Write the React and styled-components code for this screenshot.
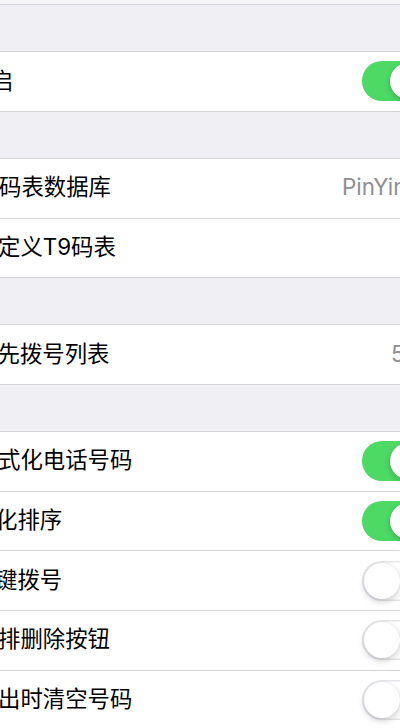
import React from "react";
import styled, { createGlobalStyle } from "styled-components";

const Global = createGlobalStyle`
  html, body { margin: 0; padding: 0; background: #efeff4; }
  body { font-family: "Inter", "Noto Sans CJK SC", "Noto Sans", sans-serif; }
`;

const Screen = styled.div`
  width: 400px;
  height: 728px;
  overflow: hidden;
  background: #efeff4;
  display: flex;
  flex-direction: column;
`;

const TopStrip = styled.div`
  height: 4px;
  flex: none;
  background: #f5f5f7;
  border-bottom: 1px solid #d3d3d8;
`;

const Gap = styled.div`
  height: 46.2px;
  flex: none;
`;

const Group = styled.div`
  flex: none;
  background: #ffffff;
  border-top: 1px solid #d3d3d8;
  border-bottom: 1px solid #d3d3d8;
  display: flex;
  flex-direction: column;
`;

const Row = styled.div`
  height: 58.6px;
  flex: none;
  display: flex;
  align-items: center;
  & + & {
    border-top: 1px solid #d3d3d8;
  }
`;

const Label = styled.span`
  font-size: 22.4px;
  line-height: 1.2;
  padding-bottom: 1px;
  color: #000;
  white-space: nowrap;
  margin-left: ${(p) => p.$shift}px;
  flex: none;
`;

const Spacer = styled.div`
  flex: 1;
`;

const Value = styled.span`
  flex: none;
  width: 100px;
  font-size: 22.4px;
  line-height: 1.2;
  padding-bottom: 1px;
  color: #8e8e93;
  white-space: nowrap;
  margin-right: ${(p) => -p.$cut}px;
`;

const Switch = styled.div`
  flex: none;
  box-sizing: border-box;
  width: 66px;
  height: 40px;
  border-radius: 20px;
  padding: 2px;
  display: flex;
  align-items: center;
  justify-content: ${(p) => (p.$on ? "flex-end" : "flex-start")};
  background: ${(p) => (p.$on ? "#4cd964" : "#ffffff")};
  box-shadow: ${(p) => (p.$on ? "none" : "inset 0 0 0 1.5px #e5e5ea")};
  margin-right: -28px;
`;

const Knob = styled.div`
  width: 36px;
  height: 36px;
  border-radius: 50%;
  background: #ffffff;
  box-shadow: 0 3px 6px rgba(0, 0, 0, 0.18), 0 0 0 0.5px rgba(0, 0, 0, 0.08);
`;

const Toggle = ({ on }) => (
  <Switch $on={on}>
    <Knob />
  </Switch>
);

export default function App() {
  return (
    <>
      <Global />
      <Screen>
        <TopStrip />
        <Gap />
        <Group>
          <Row>
            <Label $shift={-9}>启</Label>
            <Spacer />
            <Toggle on />
          </Row>
        </Group>
        <Gap />
        <Group>
          <Row>
            <Label $shift={-1}>码表数据库</Label>
            <Spacer />
            <Value $cut={42}>PinYin</Value>
          </Row>
          <Row>
            <Label $shift={-2}>定义T9码表</Label>
          </Row>
        </Group>
        <Gap />
        <Group>
          <Row>
            <Label $shift={-2.5}>先拨号列表</Label>
            <Spacer />
            <Value $cut={91}>5</Value>
          </Row>
        </Group>
        <Gap />
        <Group>
          <Row>
            <Label $shift={-2}>式化电话号码</Label>
            <Spacer />
            <Toggle on />
          </Row>
          <Row>
            <Label $shift={-5}>化排序</Label>
            <Spacer />
            <Toggle on />
          </Row>
          <Row>
            <Label $shift={-5}>键拨号</Label>
            <Spacer />
            <Toggle />
          </Row>
          <Row>
            <Label $shift={-2}>排删除按钮</Label>
            <Spacer />
            <Toggle />
          </Row>
          <Row>
            <Label $shift={-2}>出时清空号码</Label>
            <Spacer />
            <Toggle />
          </Row>
        </Group>
      </Screen>
    </>
  );
}
